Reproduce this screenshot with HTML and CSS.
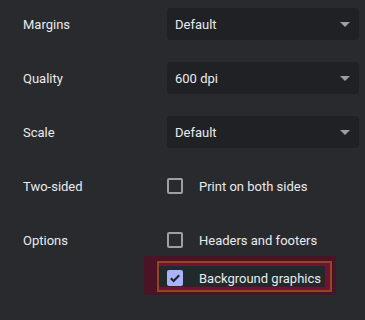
FILE: index.html
```html
<!DOCTYPE html>
<html>
<head>
<meta charset="utf-8">
<link rel="stylesheet" href="styles.css">
</head>
<body>
<div class="settings">
  <div class="row">
    <div class="label">Margins</div>
    <div class="select"><span>Default</span><span class="arrow"></span></div>
  </div>
  <div class="row">
    <div class="label">Quality</div>
    <div class="select"><span>600 dpi</span><span class="arrow"></span></div>
  </div>
  <div class="row">
    <div class="label">Scale</div>
    <div class="select"><span>Default</span><span class="arrow"></span></div>
  </div>
  <div class="row">
    <div class="label">Two-sided</div>
    <div class="checks">
      <div class="check"><span class="box"></span><span>Print on both sides</span></div>
    </div>
  </div>
  <div class="row">
    <div class="label">Options</div>
    <div class="checks">
      <div class="check"><span class="box"></span><span>Headers and footers</span></div>
      <div class="hl-outer">
        <div class="hl-inner">
          <div class="check"><span class="box checked"><svg viewBox="0 0 16 16" width="16" height="16"><path d="M3.8 8.2 L6.6 11 L12.2 5.2" fill="none" stroke="#1f2023" stroke-width="2"/></svg></span><span>Background graphics</span></div>
        </div>
      </div>
    </div>
  </div>
</div>
</body>
</html>
```

FILE: styles.css
```css
html, body {
  margin: 0;
  background: #292a2d;
}
body {
  font-family: Roboto, "Noto Sans", sans-serif;
  font-size: 13px;
  color: #e8eaed;
  width: 365px;
  height: 320px;
  overflow: hidden;
}
.settings {
  display: flex;
  flex-direction: column;
  gap: 22px;
  padding: 8px 6px 0 23px;
}
.row {
  display: grid;
  grid-template-columns: 144px 1fr;
  align-items: start;
}
.label {
  height: 32px;
  line-height: 33px;
}
.select {
  height: 32px;
  background: #202124;
  border-radius: 4px;
  display: flex;
  align-items: center;
  justify-content: space-between;
  padding: 1px 9px 0 8px;
  box-sizing: border-box;
}
.arrow {
  width: 0;
  height: 0;
  border-left: 5px solid transparent;
  border-right: 5px solid transparent;
  border-top: 5px solid #9aa0a6;
}
.checks {
  display: flex;
  flex-direction: column;
}
.check {
  height: 32px;
  display: flex;
  align-items: center;
  gap: 16px;
}
.box {
  box-sizing: border-box;
  width: 16px;
  height: 16px;
  border: 2px solid #9aa0a6;
  border-radius: 2px;
  display: flex;
}
.box.checked {
  border: none;
  background: #a9b3fb;
}
.hl-outer {
  margin-left: -23px;
  width: 192px;
  height: 39px;
  box-sizing: border-box;
  background: #4a1426;
  padding: 5px 4px 3px 13px;
}
.hl-inner {
  height: 31px;
  box-sizing: border-box;
  border: 2px solid #8e4a1f;
  background: #212a2b;
  box-shadow: inset 0 3px 0 #741233, inset 0 -3px 0 #741233, inset -5px 0 0 #741233;
  padding-left: 8px;
  display: flex;
  align-items: center;
}
.hl-inner .check {
  height: 27px;
  margin-top: 3px;
}
```
